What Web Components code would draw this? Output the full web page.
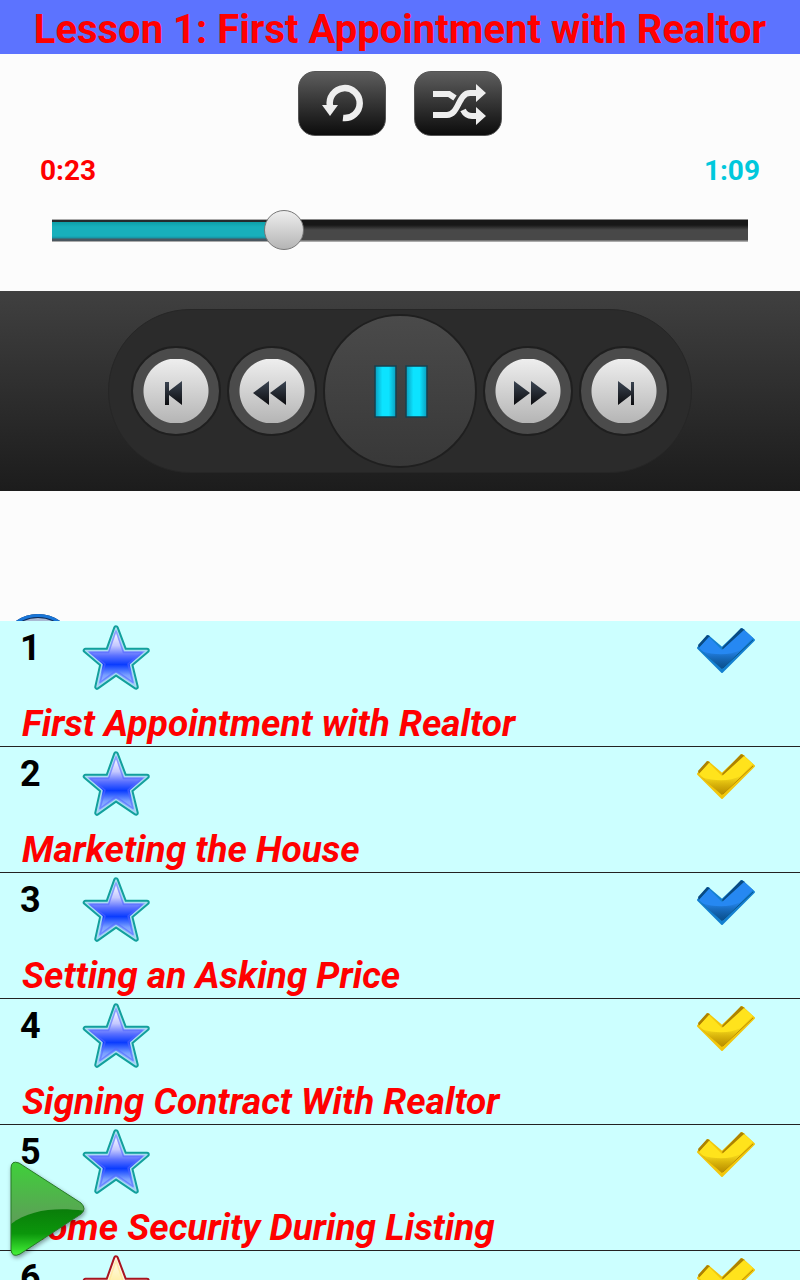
<!DOCTYPE html>
<html lang="en">
<head>
<meta charset="utf-8">
<meta name="viewport" content="width=device-width, initial-scale=1">
<title>Lesson 1: First Appointment with Realtor</title>
<style>
  html, body { margin: 0; height: 100%; background: #fcfcfc; }
  body { font-family: Roboto, "Liberation Sans", sans-serif; font-weight: 700; }
</style>
</head>
<body>
<lesson-app>
  <lesson-header slot="header">Lesson 1: First Appointment with Realtor</lesson-header>
  <mode-buttons slot="modes"></mode-buttons>
  <seek-bar slot="seek" value="23" max="69"></seek-bar>
  <transport-bar slot="transport"></transport-bar>
  <lesson-row number="1" star="blue" check="blue">First Appointment with Realtor</lesson-row>
  <lesson-row number="2" star="blue" check="yellow">Marketing the House</lesson-row>
  <lesson-row number="3" star="blue" check="blue">Setting an Asking Price</lesson-row>
  <lesson-row number="4" star="blue" check="yellow">Signing Contract With Realtor</lesson-row>
  <lesson-row number="5" star="blue" check="yellow">Home Security During Listing</lesson-row>
  <lesson-row number="6" star="gold" check="yellow"></lesson-row>
  <play-fab slot="fab"></play-fab>
</lesson-app>
<script>
function define(name, html, setup) {
  customElements.define(name, class extends HTMLElement {
    connectedCallback() {
      if (this.shadowRoot) return;
      const root = this.attachShadow({ mode: "open" });
      root.innerHTML = html;
      if (setup) setup(this, root);
    }
  });
}

define("lesson-header", `
<style>
  :host { display: block; background: #5c73ff; color: #f00; text-align: center; }
  h1 { margin: 0; padding: 6px 0 0; font-size: 40px; line-height: 48px; font-weight: 700; white-space: nowrap; }
</style>
<h1><slot></slot></h1>`);

define("mode-buttons", `
<style>
  :host { display: flex; justify-content: center; gap: 28px; padding: 17px 0 0; }
  button { width: 88px; height: 65px; padding: 0; border: 1px solid #555; border-radius: 17px;
    background: linear-gradient(#5e5e5e, #383838 45%, #0c0c0c); display: grid; place-items: center; }
  svg { width: 60px; height: 48px; fill: none; stroke: #eee; }
</style>
<button aria-label="Repeat"><svg viewBox="0 0 60 48">
  <path d="M18 26A15 15 0 1 1 31 38" stroke-width="6.500"/>
  <path d="M10 25H26L18 36Z" fill="#eee" stroke="none"/></svg></button>
<button aria-label="Shuffle"><svg viewBox="0 0 60 48" stroke-width="6">
  <path d="M5 14H21L27 18M5 35H19C31 35 30 13 42 13H50M35 30C37 34 40 36 44 36H50"/>
  <path d="M48 4L58 13 48 22ZM48 27L58 36 48 45Z" fill="#eee" stroke="none"/></svg></button>`);

define("seek-bar", `
<style>
  :host { display: block; padding: 18px 32px 41px; }
  .times { display: flex; justify-content: space-between; padding: 0 8px; font-size: 28px; line-height: 34px; }
  .now { color: #f00; }
  .total { color: #00c8dc; }
  input { -webkit-appearance: none; appearance: none; display: block; width: 100%; height: 40px; margin: 22px 0 0; background: none; }
  input::-webkit-slider-runnable-track { height: 40px; background-repeat: no-repeat;
    background-image: linear-gradient(#aaa 0 1px, #252b2d 1px 3px, #0d9fa8 3px, #18b0bc 8px 17px, #1893a4 19px, #4a5760 20px 22px, #aaa 22px),
      linear-gradient(#888 0 1px, #171717 1px 6px, #484848 11px 21px, #aaa 22px);
    background-size: calc((100% - 40px) * var(--pos)) 23px, calc(100% - 40px) 23px;
    background-position: 20px 9px, 20px 9px; }
  input::-webkit-slider-thumb { -webkit-appearance: none; width: 40px; height: 40px; box-sizing: border-box;
    border: 1px solid #777; border-radius: 50%; background: linear-gradient(#eee, #b5b5b5); }
</style>
<div class="times"><span class="now"></span><span class="total"></span></div>
<input type="range" min="0" step="1" aria-label="Position">`, (host, root) => {
  const input = root.querySelector("input");
  const clock = s => Math.floor(s / 60) + ":" + String(s % 60).padStart(2, "0");
  input.max = host.getAttribute("max");
  input.value = host.getAttribute("value");
  const update = () => {
    input.style.setProperty("--pos", input.value / input.max);
    root.querySelector(".now").textContent = clock(+input.value);
    root.querySelector(".total").textContent = clock(+input.max);
  };
  input.addEventListener("input", update);
  update();
});

define("transport-bar", `
<style>
  :host { display: flex; justify-content: center; padding: 18px 0; background: linear-gradient(#404040, #1c1c1c); }
  .pill { display: flex; align-items: center; gap: 6px; padding: 4px 22px; border: 1px solid #262626; border-radius: 82px; background: #2b2b2b; }
  button { box-sizing: border-box; width: 90px; height: 90px; padding: 0; border: 2px solid #1f1f1f; border-radius: 50%;
    background: radial-gradient(circle, transparent 32px, #4b4b4b 33px), linear-gradient(#4b4b4b 11px, #eee 11px, #b5b5b5 75px, #4b4b4b 75px); }
  button.main { width: 154px; height: 154px; background: linear-gradient(#4a4a4a, #383838); }
  svg { display: block; width: 100%; height: 100%; }
</style>
<div class="pill">
  <button aria-label="Previous"><svg viewBox="-1 -1 86 86"><defs><linearGradient id="g" x2="0" y2="1"><stop stop-color="#3b4552"/><stop offset="1" stop-color="#0c0c0f"/></linearGradient></defs>
    <path fill="url(#g)" d="M31 33H35V42L48 32V56L35 46V56H31Z"/></svg></button>
  <button aria-label="Rewind"><svg viewBox="-1 -1 86 86"><defs><linearGradient id="h" x2="0" y2="1"><stop stop-color="#3b4552"/><stop offset="1" stop-color="#0c0c0f"/></linearGradient></defs>
    <path fill="url(#h)" d="M23 44L39 32V56ZM40 44L56 32V56Z"/></svg></button>
  <button class="main" aria-label="Pause"><svg viewBox="-1 -1 150 150"><defs><linearGradient id="p"><stop stop-color="#0b9dbd"/><stop offset=".35" stop-color="#0ce3ff"/><stop offset=".65" stop-color="#0ce3ff"/><stop offset="1" stop-color="#0b9dbd"/></linearGradient></defs>
    <g fill="url(#p)" stroke="#17404e" stroke-width="1.500"><rect x="49" y="49" width="21" height="51"/><rect x="80" y="49" width="21" height="51"/></g></svg></button>
  <button aria-label="Fast forward"><svg viewBox="-1 -1 86 86"><defs><linearGradient id="i" x2="0" y2="1"><stop stop-color="#3b4552"/><stop offset="1" stop-color="#0c0c0f"/></linearGradient></defs>
    <path fill="url(#i)" d="M28 32L44 44 28 56ZM45 32L61 44 45 56Z"/></svg></button>
  <button aria-label="Next"><svg viewBox="-1 -1 86 86"><defs><linearGradient id="j" x2="0" y2="1"><stop stop-color="#3b4552"/><stop offset="1" stop-color="#0c0c0f"/></linearGradient></defs>
    <path fill="url(#j)" d="M52 33H49V42L36 32V56L49 46V56H52Z"/></svg></button>
</div>`);

define("star-icon", `
<style>
  :host { display: block; width: 72px; height: 72px; }
  svg { display: block; width: 100%; height: 100%; }
</style>
<svg viewBox="0 0 72 72" stroke-linejoin="round">
  <defs>
    <linearGradient id="blue" x2="0" y2="1"><stop offset=".05" stop-color="#fff"/><stop offset=".3" stop-color="#c4c8ff"/><stop offset=".47" stop-color="#5a70ff"/><stop offset=".62" stop-color="#0a3cff"/><stop offset=".8" stop-color="#7aa0ff"/><stop offset="1" stop-color="#aac6ff"/></linearGradient>
    <linearGradient id="gold" x2="0" y2="1"><stop stop-color="#fffdf4"/><stop offset=".4" stop-color="#ffefa8"/><stop offset="1" stop-color="#ffc830"/></linearGradient>
    <path id="s" d="M36 7L44.500 29.500H67L50.500 43.500 56 66 36 52.500 17 66 22 43.500 5.500 29.500H28Z"/>
  </defs>
  <use href="#s" class="rim" stroke-width="5.500"/>
  <use href="#s" class="glow" stroke-width="1.500"/>
  <path class="edge" d="M36 10L43.500 31.500H62L48 43 53 61.500 36 49.500 20 61.500 25 43 10 31.500H28.500Z" fill="none" stroke-width="1.500"/>
</svg>`, (host, root) => {
  const gold = host.getAttribute("color") === "gold";
  root.querySelector(".rim").setAttribute("stroke", gold ? "#a81420" : "#12a09c");
  const glow = root.querySelector(".glow");
  glow.setAttribute("stroke", gold ? "#fff0dc" : "#a8dcf2");
  glow.setAttribute("fill", gold ? "url(#gold)" : "url(#blue)");
  const edge = root.querySelector(".edge");
  edge.setAttribute("stroke", gold ? "#ffe48c" : "#5468ff");
  edge.setAttribute("stroke-opacity", ".6");
});

define("check-icon", `
<style>
  :host { display: block; width: 72px; height: 60px; }
  svg { display: block; width: 100%; height: 100%; }
</style>
<svg viewBox="0 0 72 60" stroke-linejoin="round">
  <defs>
    <linearGradient id="f" x2="0" y2="1"><stop offset=".6" class="a"/><stop offset="1" class="b"/></linearGradient>
    <linearGradient id="l" x2="0" y2="1"><stop offset="0" class="d" stop-opacity=".1"/><stop offset="1" class="d" stop-opacity=".8"/></linearGradient>
  </defs>
  <path class="base" d="M8 27L18 15 32 27 52 8 64 19 32 51Z" stroke-width="2"/>
  <path class="shade" d="M8 24L17 14 20 15 9 27ZM32 27L51 7 55 9 34 30Z"/>
  <path fill="url(#f)" d="M9 27L19 16 32 29 54 9 63 17 32 48Z"/>
  <path fill="url(#l)" d="M11 30C27 35 40 34 51 29L32 48Z"/>
  <path class="line" d="M33 47L63 19" fill="none" stroke-width="1" opacity=".8"/>
</svg>`, (host, root) => {
  const c = host.getAttribute("color") === "blue"
    ? ["#2688f2", "#1668b8", "#1480d0", "#084a83"]
    : ["#ffe31c", "#e8be00", "#f2c70c", "#ad8200"];
  const q = s => root.querySelector(s);
  q(".a").setAttribute("stop-color", c[0]);
  q(".b").setAttribute("stop-color", c[1]);
  q(".base").setAttribute("fill", c[2]);
  q(".base").setAttribute("stroke", c[2]);
  q(".shade").setAttribute("fill", c[3]);
  root.querySelectorAll(".d").forEach(s => s.setAttribute("stop-color", c[3]));
  q(".line").setAttribute("stroke", c[3]);
});

define("lesson-row", `
<style>
  :host { display: block; flex: none; box-sizing: border-box; height: 126px; border-bottom: 1px solid #222; background: #cff; font-size: 36px; line-height: 42px; }
  .top { display: flex; align-items: flex-start; height: 82px; padding: 0 38px 0 20px; }
  .number { width: 60px; padding-top: 6px; color: #000; }
  check-icon { margin-left: auto; }
  .title { padding: 0 22px; color: #f00; font-size: 37px; font-style: italic; white-space: nowrap; }
</style>
<div class="top"><span class="number"></span></div>
<div class="title"><slot></slot></div>`, (host, root) => {
  root.querySelector(".number").textContent = host.getAttribute("number");
  for (const kind of ["star", "check"]) {
    const icon = document.createElement(kind + "-icon");
    icon.setAttribute("color", host.getAttribute(kind));
    root.querySelector(".top").append(icon);
  }
});

define("play-fab", `
<style>
  :host { display: block; width: 80px; height: 100px; }
  button { display: block; padding: 0; border: 0; background: none; }
  svg { display: block; width: 80px; height: 100px; overflow: visible; filter: drop-shadow(1px 2px 2px #0006); }
</style>
<button aria-label="Play"><svg viewBox="0 0 80 100">
  <defs>
    <linearGradient id="t" x2="0" y2="1"><stop stop-color="#3fd03a"/><stop offset=".65" stop-color="#5d9e58"/></linearGradient>
    <linearGradient id="u" x2="0" y2="1"><stop stop-color="#0a7d0a"/><stop offset=".5" stop-color="#0b960b"/><stop offset="1" stop-color="#4dff40"/></linearGradient>
    <clipPath id="c"><path d="M3 8Q3 0 11 3L73 43Q79 49 73 54L12 94Q4 98 3 90Z"/></clipPath>
  </defs>
  <path fill="url(#t)" d="M3 8Q3 0 11 3L73 43Q79 49 73 54L12 94Q4 98 3 90Z"/>
  <path clip-path="url(#c)" fill="url(#u)" d="M3 64C22 49 50 47 78 51V98H3Z"/>
  <path fill="none" stroke="#277a27" stroke-width="1" d="M3 8Q3 0 11 3L73 43Q79 49 73 54L12 94Q4 98 3 90Z"/>
</svg></button>`);

define("lesson-app", `
<style>
  :host { display: flex; flex-direction: column; height: 100vh; position: relative; overflow: hidden; }
  .player { flex: none; }
  .strip { height: 130px; overflow: hidden; padding: 0 0 0 1px; box-sizing: border-box; }
  .strip svg { display: block; width: 76px; height: 76px; margin-top: 123px; }
  .list { flex: 1; min-height: 0; overflow: hidden; background: #cff; }
  .fab { position: absolute; left: 8px; bottom: 20px; }
</style>
<div class="player">
  <slot name="header"></slot>
  <slot name="modes"></slot>
  <slot name="seek"></slot>
  <slot name="transport"></slot>
  <div class="strip"><svg viewBox="0 0 76 76"><circle cx="37" cy="38" r="36" fill="#a9b9d3" stroke="#0d2b58" stroke-width="4"/><circle cx="37" cy="38" r="36.500" fill="none" stroke="#1976d8" stroke-width="3"/></svg></div>
</div>
<div class="list"><slot></slot></div>
<div class="fab"><slot name="fab"></slot></div>`);
</script>
</body>
</html>
